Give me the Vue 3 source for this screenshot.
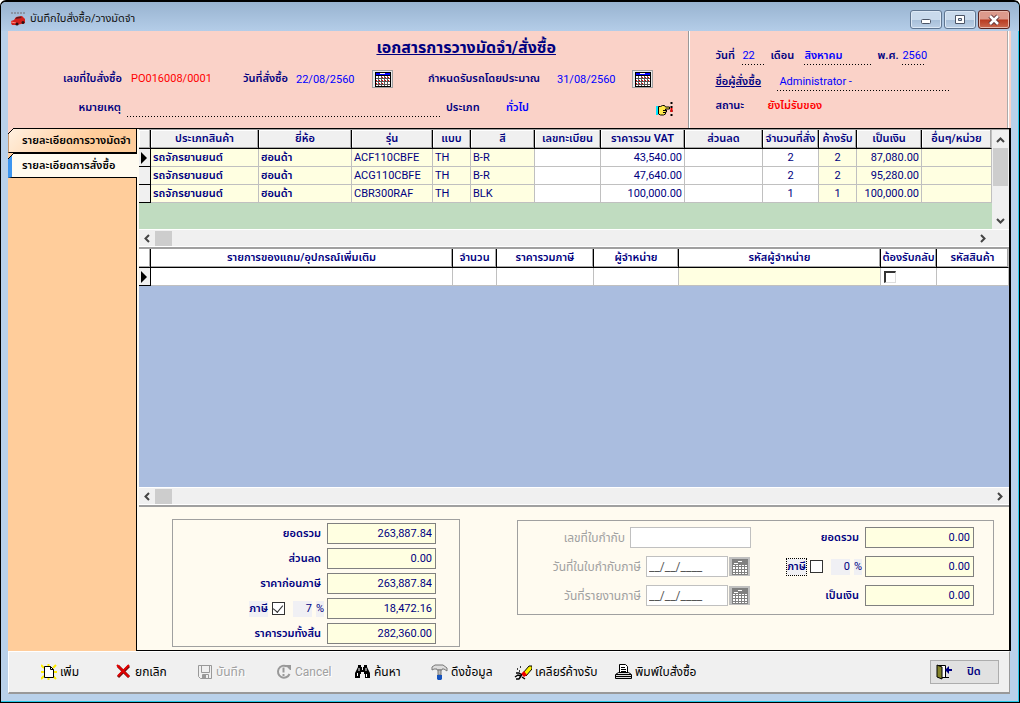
<script setup>
import { ref } from 'vue'

const orderCols = [
  { w: 12 }, { w: 108, t: 'ประเภทสินค้า' }, { w: 93, t: 'ยี่ห้อ' }, { w: 81, t: 'รุ่น' }, { w: 38, t: 'แบบ' },
  { w: 64, t: 'สี' }, { w: 66, t: 'เลขทะเบียน' }, { w: 84, t: 'ราคารวม VAT' }, { w: 78, t: 'ส่วนลด' },
  { w: 56, t: 'จำนวนที่สั่ง' }, { w: 38, t: 'ค้างรับ' }, { w: 65, t: 'เป็นเงิน' }, { w: 0, t: 'อื่นๆ/หน่วย' },
]
const orders = [
  { model: 'ACF110CBFE', color: 'B-R', price: '43,540.00', qty: 2, left: 2, total: '87,080.00' },
  { model: 'ACG110CBFE', color: 'B-R', price: '47,640.00', qty: 2, left: 2, total: '95,280.00' },
  { model: 'CBR300RAF', color: 'BLK', price: '100,000.00', qty: 1, left: 1, total: '100,000.00' },
]
const giftCols = [
  { w: 12 }, { w: 302, t: 'รายการของแถม/อุปกรณ์เพิ่มเติม' }, { w: 44, t: 'จำนวน' }, { w: 97, t: 'ราคารวมภาษี' },
  { w: 85, t: 'ผู้จำหน่าย' }, { w: 202, t: 'รหัสผู้จำหน่าย' }, { w: 56, t: 'ต้องรับกลับ' }, { w: 0, t: 'รหัสสินค้า' },
]
const colStyle = (c) => (c.w ? { width: c.w + 'px' } : {})
const orderVat = ref(true)
const giftVat = ref(false)
</script>

<template>
  <div class="window">
    <header class="titlebar">
      <svg class="car" width="16" height="16" viewBox="0 0 16 16">
        <path d="M1 2h14" stroke="#8a93a3" stroke-width="2" stroke-dasharray="2 1" />
        <path d="M1 10l3-1 2-3 6-1 2 2 1 1v4l-4 1-4 1-5 0-1-2z" fill="#d3201c" />
        <path d="M5 8l2-2 4-.5.5 1.5z" fill="#5a1a20" />
        <path d="M1 11l5 1" stroke="#ff8a80" />
        <circle cx="7" cy="13" r="1.6" fill="#301014" /><circle cx="13" cy="11.500" r="1.500" fill="#301014" />
      </svg>
      <h1>บันทึกใบสั่งซื้อ/วางมัดจำ</h1>
      <button class="win" aria-label="Minimize"><svg width="12" height="12"><rect x="1.500" y="5.500" width="9" height="4" rx="1" fill="#fff" stroke="#4b5567" /></svg></button>
      <button class="win" aria-label="Maximize"><svg width="12" height="12"><path d="M1.500 1.500h9v8h-9z M4.500 4.500h3v2h-3z" fill="#fff" fill-rule="evenodd" stroke="#4b5567" /></svg></button>
      <button class="win close" aria-label="Close"><svg width="14" height="12"><path d="M3 2l8 8M11 2l-8 8" stroke="#5b3036" stroke-width="4.500" /><path d="M3 2l8 8M11 2l-8 8" stroke="#fff" stroke-width="2.500" /></svg></button>
    </header>

    <section class="head">
      <div class="head-main">
        <h2>เอกสารการวางมัดจำ/สั่งซื้อ</h2>
        <div class="row1">
          <span class="lb">เลขที่ใบสั่งซื้อ</span><span class="red">PO016008/0001</span>
          <label class="lb" for="od">วันที่สั่งซื้อ</label><input id="od" class="plain blue" value="22/08/2560">
          <button class="cal" aria-label="เลือกวันที่สั่งซื้อ">
            <svg width="16" height="15"><path d="M0 0h16v15H0z" fill="#000" /><path d="M1 1h14v2H1z" fill="#00f" /><path d="M5 1h5v1H5z" fill="#fff" /><path d="M1 4h14v10H1z" fill="#fff" /><path d="M1 6.500h14M1 9.500h14M1 12.500h14" stroke="#555" /><path d="M3.500 4v10M6.500 4v10M9.500 4v10M12.500 4v10" stroke="#555" /><path d="M7 5.500h7M1 8.500h14M1 11.500h9" stroke="#e00" stroke-dasharray="1 2" /></svg>
          </button>
          <label class="lb" for="rd">กำหนดรับรถโดยประมาณ</label><input id="rd" class="plain blue" value="31/08/2560">
          <button class="cal" aria-label="เลือกวันที่รับรถ">
            <svg width="16" height="15"><path d="M0 0h16v15H0z" fill="#000" /><path d="M1 1h14v2H1z" fill="#00f" /><path d="M5 1h5v1H5z" fill="#fff" /><path d="M1 4h14v10H1z" fill="#fff" /><path d="M1 6.500h14M1 9.500h14M1 12.500h14" stroke="#555" /><path d="M3.500 4v10M6.500 4v10M9.500 4v10M12.500 4v10" stroke="#555" /><path d="M7 5.500h7M1 8.500h14M1 11.500h9" stroke="#e00" stroke-dasharray="1 2" /></svg>
          </button>
        </div>
        <div class="row2">
          <label class="lb" for="note">หมายเหตุ</label><input id="note" class="plain dots">
          <span class="lb">ประเภท</span><span class="blue bold">ทั่วไป</span>
          <svg class="hand" width="17" height="16">
            <path d="M0 4h2v9H0z" fill="#00e5ff" /><path d="M2.500 4.500h2l2-1h2l1 1.500h4v2h-4v1h1v2h-1v2l-2 1h-3l-2-1z" fill="#ffe84a" stroke="#000" /><path d="M7 8.500h3M7 10.500h2" stroke="#000" /><path d="M15.500 0v16" stroke="#000" stroke-width="2" stroke-dasharray="2 2" /><path d="M14.500 6h2v4h-2z" fill="#e00" />
          </svg>
        </div>
      </div>
      <div class="head-side">
        <div class="row3">
          <span class="lb">วันที่</span><span class="blue dots">22</span><span class="lb">เดือน</span><span class="blue bold dots">สิงหาคม</span><span class="lb">พ.ศ.</span><span class="blue dots year">2560</span>
        </div>
        <div class="row4"><span class="lb u">ชื่อผู้สั่งซื้อ</span><span class="blue dots pad">Administrator -</span></div>
        <div class="row5"><span class="lb">สถานะ</span><span class="red bold">ยังไม่รับของ</span></div>
      </div>
    </section>

    <main>
      <nav>
        <button class="tab"><svg viewBox="0 0 6 6" width="6" height="6"><path d="M0 0h6L0 6z" fill="#fad2c8" /><path d="M0 6L6 0" stroke="#000" /></svg>รายละเอียดการวางมัดจำ</button>
        <button class="tab on"><svg viewBox="0 0 6 6" width="6" height="6"><path d="M0 0h6L0 6z" fill="#ffcd9b" /><path d="M0 6L6 0" stroke="#000" /></svg>รายละเอียดการสั่งซื้อ</button>
      </nav>
      <div class="content">
        <div class="orders">
          <div class="view">
            <div class="green">
              <table>
                <colgroup><col v-for="(c, i) in orderCols" :key="i" :style="colStyle(c)"></colgroup>
                <thead><tr><th v-for="(c, i) in orderCols" :key="i">{{ c.t }}</th></tr></thead>
                <tbody>
                  <tr v-for="(o, i) in orders" :key="i">
                    <td class="ind"><svg v-if="i === 0" width="7" height="12"><path d="M0 0l6 6-6 6z" /></svg></td>
                    <td class="y bold">รถจักรยานยนต์</td><td class="y bold">ฮอนด้า</td><td class="y">{{ o.model }}</td><td class="y">TH</td><td class="y">{{ o.color }}</td>
                    <td></td><td class="r">{{ o.price }}</td><td></td><td class="c">{{ o.qty }}</td><td class="c y">{{ o.left }}</td><td class="r y">{{ o.total }}</td><td class="y"></td>
                  </tr>
                </tbody>
              </table>
            </div>
            <div class="vbar">
              <svg width="9" height="6"><path d="M1 5l3.500-3.500L8 5" /></svg><i></i><svg width="9" height="6"><path d="M1 1l3.500 3.500L8 1" /></svg>
            </div>
          </div>
          <div class="hbar short"><svg width="6" height="9"><path d="M5 1L1.500 4.500 5 8" /></svg><i></i><svg width="6" height="9"><path d="M1 1l3.500 3.500L1 8" /></svg></div>
        </div>

        <div class="gifts">
          <div class="bluebg">
            <table class="white">
              <colgroup><col v-for="(c, i) in giftCols" :key="i" :style="colStyle(c)"></colgroup>
              <thead><tr><th v-for="(c, i) in giftCols" :key="i">{{ c.t }}</th></tr></thead>
              <tbody><tr>
                <td class="ind"><svg width="7" height="12"><path d="M0 0l6 6-6 6z" /></svg></td>
                <td></td><td></td><td></td><td></td><td class="y"></td><td><input class="sunk" type="checkbox" aria-label="ต้องรับกลับ"></td><td></td>
              </tr></tbody>
            </table>
          </div>
          <div class="hbar"><svg width="6" height="9"><path d="M5 1L1.500 4.500 5 8" /></svg><i></i><svg width="6" height="9"><path d="M1 1l3.500 3.500L1 8" /></svg></div>
        </div>

        <div class="totals">
          <div class="box sum">
            <label class="lb" for="t1">ยอดรวม</label><input id="t1" class="amt" value="263,887.84">
            <label class="lb" for="t2">ส่วนลด</label><input id="t2" class="amt" value="0.00">
            <label class="lb" for="t3">ราคาก่อนภาษี</label><input id="t3" class="amt" value="263,887.84">
            <span class="vat"><label class="tint bold" for="v1">ภาษี</label><input id="v1" v-model="orderVat" class="ck" type="checkbox"><span class="tint rate">7</span><span class="tint">%</span></span><input class="amt" aria-label="ภาษี" value="18,472.16">
            <label class="lb" for="t5">ราคารวมทั้งสิ้น</label><input id="t5" class="amt" value="282,360.00">
          </div>
          <div class="box tax">
            <div class="docs">
              <div><label for="d1">เลขที่ใบกำกับ</label><input id="d1" class="off wide" disabled></div>
              <div><label for="d2">วันที่ในใบกำกับภาษี</label><input id="d2" class="off" value="__/__/____" disabled>
                <button class="cal gray" disabled aria-label="เลือกวันที่ใบกำกับ"><svg width="16" height="16"><path d="M0 0h16v16H0z" fill="#808080" /><path d="M2 4.500h4M6 2.500h4" stroke="#fff" /><path d="M1 6h14v9H1z" fill="#fff" /><path d="M1 7.500h14M1 10.500h14M1 13.500h14M3.500 5v10M6.500 5v10M9.500 5v10M12.500 5v10" stroke="#808080" /></svg></button>
              </div>
              <div><label for="d3">วันที่รายงานภาษี</label><input id="d3" class="off" value="__/__/____" disabled>
                <button class="cal gray" disabled aria-label="เลือกวันที่รายงาน"><svg width="16" height="16"><path d="M0 0h16v16H0z" fill="#808080" /><path d="M2 4.500h4M6 2.500h4" stroke="#fff" /><path d="M1 6h14v9H1z" fill="#fff" /><path d="M1 7.500h14M1 10.500h14M1 13.500h14M3.500 5v10M6.500 5v10M9.500 5v10M12.500 5v10" stroke="#808080" /></svg></button>
              </div>
            </div>
            <div class="money">
              <div><label class="lb" for="m1">ยอดรวม</label><input id="m1" class="amt" value="0.00"></div>
              <div><span class="vat"><label class="tint bold focus" for="v2">ภาษี</label><input id="v2" v-model="giftVat" class="ck" type="checkbox"><span class="tint rate">0</span><span class="tint">%</span></span><input class="amt" aria-label="ภาษีของแถม" value="0.00"></div>
              <div><label class="lb" for="m3">เป็นเงิน</label><input id="m3" class="amt" value="0.00"></div>
            </div>
          </div>
        </div>
      </div>
    </main>

    <footer>
      <div class="tools">
        <button><svg width="16" height="16"><path d="M0 1l3 3M15 1l-3 3M0 15l3-3M15 15l-3-3M0 8h3M12 8h4M7.500 0v3M7.500 13v3" stroke="#ffee00" stroke-width="2" /><path d="M3.500 2.500h6l3 3v8h-9z" fill="#fff" stroke="#000" /><path d="M9.500 2.500v3h3" fill="none" stroke="#000" /></svg>เพิ่ม</button>
        <button><svg width="16" height="16"><path d="M2 2l11 11M13 2L2 13" stroke="#701010" stroke-width="3" /><path d="M1 1l12 12M13 1L2 12" stroke="#e40000" stroke-width="2" /></svg>ยกเลิก</button>
        <button disabled><svg width="16" height="16"><path d="M1.500 1.500h13v13h-11l-2-2zM4.500 1.500h8v7h-8zM5.500 10.500h6v4h-6z" fill="none" stroke="#999" /><path d="M6 11h3v3H6z" fill="#999" /></svg>บันทึก</button>
        <button disabled><svg width="16" height="16"><path d="M11 2.500A6 6 0 1 0 13.500 10" fill="none" stroke="#999" stroke-width="2" /><path d="M10 1h5v5h-1l-4-4z" fill="#999" /><path d="M7.500 3.500v5M7.500 10v2" stroke="#999" stroke-width="2" /></svg>Cancel</button>
        <button class="near"><svg width="16" height="14"><path d="M3 0h3v2h1v3h1V2h1V0h3v2l3 6v5h-5V9H9V7H6v2H5v4H0V8l3-6z" fill="#000" /><path d="M4 3v3M11 3v3M2.500 8v3M11.500 9v3" stroke="#fff" /></svg>ค้นหา</button>
        <button class="near"><svg width="17" height="16"><path d="M1 3l3-2h8l4 3v3l-3-2h-2v1H6V5H3L1 6z" fill="#ddd" stroke="#777" /><path d="M7 6h3v5H7z" fill="#bbb" stroke="#777" /><path d="M6 11h5v4l-1 1H7l-1-1z" fill="#1553bd" /></svg>ดึงข้อมูล</button>
        <button><svg width="18" height="16"><path d="M9 9l6-7h3v3l-6 7z" fill="#f9ef00" stroke="#000" /><path d="M7 10l3-3 3 4-3 2z" fill="#e00" /><path d="M2 9h3l3 2M1 13l3-2 3 1-2 3M8 13l3 2M3 5h1M6 3h1M5 7h1M2 15h3" fill="none" stroke="#000" stroke-width="1.500" /></svg>เคลียร์ค้างรับ</button>
        <button><svg width="17" height="16"><path d="M4.500 8.500v-8h6l2 2v6z" fill="#fff" stroke="#000" /><path d="M6 3.500h4M6 5.500h5M6 7.500h5" stroke="#000" /><path d="M.5 10.500l3-2h10l3 2v4H.5z" fill="#ddd" stroke="#000" /><path d="M1 10.500h15M1 12.500h15" stroke="#000" /></svg>พิมพ์ใบสั่งซื้อ</button>
      </div>
      <button class="exit"><svg width="17" height="16"><path d="M2.500 1.500h7v12h-7z" fill="#fff" stroke="#000" /><path d="M1 1l5 2v12l-5-2z" fill="#84842a" stroke="#000" /><path d="M8 13.500h5" stroke="#000" /><path d="M9 6l4-4v3h3v2h-3v3z" fill="#000080" /></svg><span>ปิด</span></button>
    </footer>
  </div>
</template>

<style>
body { margin: 0; }
</style>

<style scoped>
* { box-sizing: border-box; }
.window {
  min-height: 100vh; display: flex; flex-direction: column; padding: 0 8px 8px 7px;
  background: #b9d1ea; border: 1px solid #000; border-top-width: 2px; border-radius: 6px 6px 0 0;
  box-shadow: inset -1px -1px #25c8e8;
  font: 11px/16px Roboto, "Noto Sans Thai", "Noto Sans", sans-serif; color: #000080;
}
button, input { font: inherit; color: inherit; margin: 0; padding: 0; border: 0; background: none; border-radius: 0; }
svg { flex: none; display: block; }
h1, h2 { margin: 0; font-weight: 400; }
span, label, th, td, button, h1, h2 { white-space: nowrap; }

.titlebar { height: 29px; margin: 0 -8px 0 -7px; padding: 6px 9px 0 9px; display: flex; align-items: flex-start; background: linear-gradient(#98b3d0, #b4cde8); border-radius: 5px 5px 0 0; }
.titlebar .car { margin: 3px 4px 0 0; }
h1 { flex: 1; font-size: 11px; line-height: 22px; color: #111; }
.win { width: 32px; height: 19px; margin: 2px 0 0 2px; display: flex; align-items: center; justify-content: center; border: 1px solid #5f7590; border-radius: 3px; background: linear-gradient(#c9daec 50%, #a6bed8 50%, #bcd0e6); box-shadow: inset 0 0 0 1px #dce8f5; }
.win.close { background: linear-gradient(#dc9a8c 48%, #b83a20 52%, #cb6a50); border-color: #5a2520; box-shadow: inset 0 0 0 1px #e8b8ac; }

.head { height: 97px; display: flex; background: #fad2c8; }
.head-main { flex: 7; padding-top: 7px; border-right: 1px solid #999; }
.head-side { flex: 3; margin-right: 3px; padding: 16px 0 0 25px; border-left: 1px solid #fff; border-right: 1px solid #aaa; box-shadow: 1px 0 #fff; }
h2 { font-size: 16px; line-height: 20px; font-weight: 700; text-align: center; text-decoration: underline; padding-left: 236px; }
.lb, .bold { font-weight: 600; }
.red { color: #f00; }
.blue { color: #00f; }
.u { text-decoration: underline; }
.plain { min-width: 0; width: 100%; height: 18px; }
.dots { background: repeating-linear-gradient(90deg, #000 0 1px, transparent 1px 3px) left bottom / 100% 1px no-repeat; }
.row1 { display: grid; grid-template-columns: 114px 103px 44px 67px 22px 145px 66px 22px; column-gap: 9px; align-items: center; margin-top: 11px; height: 20px; }
.row1 .lb { text-align: right; }
.row1 .cal + .lb { padding-right: 8px; }
.row2 { display: grid; grid-template-columns: 113px 313px 54px 144px 18px; column-gap: 6px; align-items: center; margin-top: 9px; height: 20px; }
.row2 .lb:first-child { text-align: right; }
.hand { margin-top: 4px; }
.cal { width: 21px; height: 18px; display: flex; align-items: center; justify-content: center; background: #e8e8e8; border: 1px solid #a0a0a0; }
.row3, .row4, .row5 { display: grid; align-items: center; height: 18px; }
.row3 { grid-template-columns: 27px 28px 34px 73px 25px 28px; }
.row3 .dots, .row4 .dots { padding-bottom: 1px; margin-right: 4px; }
.row4 { grid-template-columns: 62px 176px; margin-top: 8px; }
.row5 { grid-template-columns: 52px 1fr; margin-top: 6px; }
.pad { padding-left: 2px; }

main { flex: 1; display: flex; background: #ffcd9b; }
nav { width: 128px; display: flex; flex-direction: column; flex: none; }
.tab { position: relative; height: 25px; padding-left: 13px; text-align: left; font-weight: 600; color: #000; border: 1px solid #000; border-right: 0; background: linear-gradient(135deg, #fff0e0, #ffcd9b 60%); border-left-color: #c89a70; }
.tab svg { position: absolute; left: -1px; top: -1px; }
.tab.on { background: #fffbf0; border-left: 4px solid #3c96f0; padding-left: 10px; margin-right: -1px; z-index: 1; }
.tab.on svg { left: -4px; }
.content { flex: 1; min-width: 0; display: flex; flex-direction: column; background: #fffbf0; border: 1px solid #000; border-right-width: 2px; padding-left: 2px; }

.orders, .gifts { border-bottom: 2px solid #a0a0a0; display: flex; flex-direction: column; }
.orders { border-top: 1px solid #a0a0a0; height: 120px; }
.gifts { flex: 1; min-height: 258px; }
.view { flex: 1; display: flex; }
.green { flex: 1; background: #c0dcc0; }
.bluebg { flex: 1; background: #aabddf; }
table { width: 100%; table-layout: fixed; border-collapse: separate; border-spacing: 0; }
th { height: 19px; padding: 0; line-height: 16px; font-weight: 600; background: #f0f0f0; border-right: 1px solid #000; border-bottom: 1px solid #000; box-shadow: inset -1px -1px #a8a8a8, inset 1px 1px #fff; }
.white th { background: #fff; }
td { height: 18px; padding: 0 2px; line-height: 16px; background: #fff; border-right: 1px solid #c0c0c0; border-bottom: 1px solid #c0c0c0; }
th:last-child, td:last-child { border-right-color: #c0c0c0; }
td.y { background: #ffffe1; }
td.ind { background: #f0f0f0; border-right: 1px solid #000; border-bottom-color: #000; }
.r { text-align: right; }
.c { text-align: center; }
.hbar, .vbar { display: flex; align-items: center; background: #f0f0f0; }
.hbar { height: 18px; padding: 0 6px 0 5px; border-top: 1px solid #fff; border-bottom: 1px solid #fff; }
.hbar.short { padding-right: 23px; }
.hbar i { width: 17px; height: 15px; margin-left: 5px; background: #cdcdcd; }
.hbar svg:last-child { margin-left: auto; }
.vbar { width: 17px; flex-direction: column; padding: 7px 0 5px; }
.vbar i { width: 15px; height: 38px; margin-top: 5px; background: #cdcdcd; }
.vbar svg:last-child { margin-top: auto; }
.hbar path, .vbar path { fill: none; stroke: #444; stroke-width: 2; }
.sunk { display: block; width: 12px; height: 12px; margin-left: 1px; appearance: none; border: 1px solid #ddd; border-top: 2px solid #333; border-left: 2px solid #333; }

.totals { display: flex; align-items: flex-start; justify-content: space-between; padding: 12px 15px 3px 33px; }
.box { border: 1px solid #a0a0a0; }
.sum { width: 288px; display: grid; grid-template-columns: 151px 110px; column-gap: 3px; row-gap: 4px; align-items: center; padding: 3px 0 2px; }
.sum > .lb, .sum > .vat { justify-self: end; }
.sum > .lb, .money .lb { padding-right: 3px; }
.amt { width: 109px; height: 21px; padding-right: 3px; text-align: right; background: #ffffe1; border: 1px solid #808080; }
.vat { display: flex; align-items: center; gap: 4px; }
.tint { background: #f0f0f4; }
.rate { width: 19px; text-align: right; margin-left: 4px; }
.focus { outline: 1px dotted #000; }
.ck { width: 13px; height: 13px; appearance: none; background: #fff; border: 1px solid #333; display: flex; justify-content: center; }
.ck:checked::before { content: ""; width: 5px; height: 8px; border: solid #333; border-width: 0 1px 1px 0; transform: rotate(40deg); }
.tax { width: 477px; display: flex; justify-content: space-between; padding: 6px 19px 8px 0; margin-top: 1px; }
.docs, .money { display: flex; flex-direction: column; gap: 8px; }
.docs > div, .money > div { display: flex; align-items: center; height: 21px; }
.docs { width: 233px; color: #a0a0a0; font-size: 12px; }
.docs label { width: 123px; text-align: right; margin-right: 5px; }
.docs > div:first-child label { width: 107px; }
.off { width: 82px; height: 21px; padding-left: 2px; border: 1px solid #c0c0c0; background: #fff; color: #555; }
.wide { width: 121px; }
.cal.gray { height: 19px; margin-left: 1px; background: #c0c0c0; border-color: #c0c0c0; }
.money > div { justify-content: flex-end; gap: 3px; }

footer { height: 43px; margin-right: 1px; display: flex; align-items: center; justify-content: space-between; background: #f0f0f0; border: 1px solid #fff; border-right: 1px solid #999; border-bottom: 2px solid #999; padding: 0 10px 0 32px; }
.tools { display: grid; grid-template-columns: 75px 81px 79px 79px 76px 83px 101px 100px; }
.tools button { display: flex; align-items: center; gap: 3px; height: 24px; font-size: 12px; color: #000; }
.tools button:disabled { color: #a0a0a0; text-shadow: 1px 1px #fff; }
.exit { width: 69px; height: 24px; display: flex; align-items: center; gap: 14px; padding-left: 5px; background: #e1e1e1; border: 1px solid #adadad; font-weight: 600; }
</style>
